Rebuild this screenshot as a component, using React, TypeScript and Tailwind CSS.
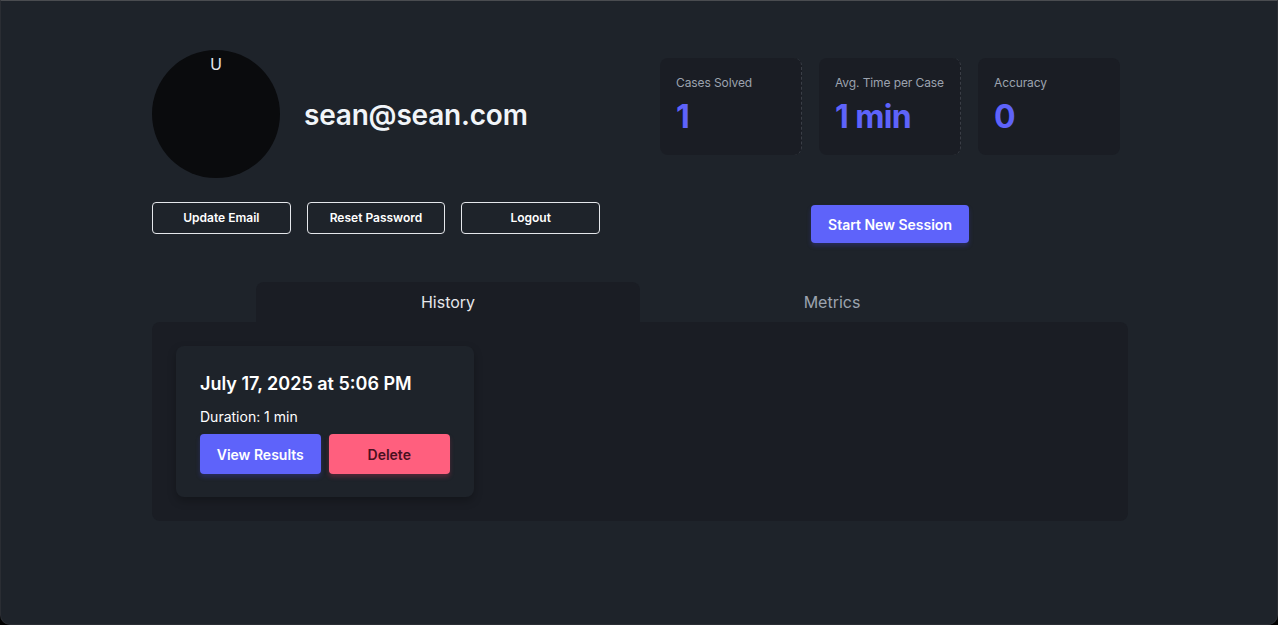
import React from "react";

export default function App() {
  return (
    <div className="w-[1278px] h-[625px] bg-[#000] overflow-hidden" style={{ fontFamily: "Inter, 'Noto Sans', sans-serif" }}>
      <div className="w-full h-full bg-[#1e232a] border-t border-[#4a4c50] border-x border-b border-x-[#2a2d33] border-b-[#2a2d33] rounded-b-[10px] pt-[49px]">
        <div className="w-[976px] mx-auto translate-x-[1px]">
          <div className="flex">
            <div className="flex flex-col w-[448px]">
              <div className="flex items-center">
                <div className="w-32 h-32 rounded-full bg-[#0a0b0d] flex justify-center pt-[5px]">
                  <span className="text-[16px] leading-[20px] text-[#e5e7eb]" style={{ fontFamily: "'Liberation Sans', Arial, sans-serif" }}>U</span>
                </div>
                <div className="ml-6 mt-[2px] text-[28px] font-semibold text-[#f1f5f9] tracking-[-0.2px]">sean@sean.com</div>
              </div>
              <div className="flex gap-4 mt-6">
                {["Update Email", "Reset Password", "Logout"].map((t) => (
                  <button key={t} className="w-[139px] h-8 border border-[#e5e7eb] rounded-[4px] text-[12px] font-semibold text-white">
                    {t}
                  </button>
                ))}
              </div>
            </div>
            <div className="flex flex-col items-center ml-[60px] w-[460px] pt-[8px]">
              <div className="flex gap-[17px]">
                {[
                  { l: "Cases Solved", v: "1", d: true },
                  { l: "Avg. Time per Case", v: "1 min", d: true },
                  { l: "Accuracy", v: "0", d: false },
                ].map((s) => (
                  <div
                    key={s.l}
                    className={`w-[142px] h-[97px] rounded-lg bg-[#1a1d24] px-4 pt-[17px] ${s.d ? "border-r border-dashed border-[#3a3e46]" : ""}`}
                  >
                    <div className="text-[12px] leading-4 text-[#9ca3af] whitespace-nowrap tracking-[-0.1px]">{s.l}</div>
                    <div className="mt-[6px] text-[32px] leading-10 font-bold text-[#5e63fa] tracking-[-0.6px] whitespace-nowrap">{s.v}</div>
                  </div>
                ))}
              </div>
              <button className="mt-[50px] w-[158px] h-[38px] rounded-[4px] bg-[#5e63fa] text-white text-[14px] font-semibold shadow-[0_3px_4px_rgba(60,64,180,0.35)]">
                Start New Session
              </button>
            </div>
          </div>

          <div className="mt-[39px] flex justify-center">
            <div className="w-[768px] flex">
              <div className="flex-1 h-10 rounded-t-lg bg-[#1a1d24] flex items-center justify-center text-[16px] text-[#e5e7eb]">History</div>
              <div className="flex-1 h-10 flex items-center justify-center text-[16px] text-[#9ca3af]">Metrics</div>
            </div>
          </div>
          <div className="h-[199px] rounded-lg bg-[#1a1d24] p-6">
            <div className="w-[298px] h-[151px] rounded-lg bg-[#1e232a] p-6 shadow-[0_4px_8px_rgba(0,0,0,0.25)]">
              <div className="text-[18px] leading-[26px] font-semibold text-white mt-[1px]">July 17, 2025 at 5:06 PM</div>
              <div className="mt-[10px] text-[14px] leading-5 text-white">Duration: 1 min</div>
              <div className="flex gap-2 mt-[7px]">
                <button className="w-[121px] h-10 rounded-[4px] bg-[#5e63fa] text-white text-[14px] font-semibold shadow-[0_3px_4px_rgba(60,64,180,0.35)]">View Results</button>
                <button className="w-[122px] h-10 rounded-[4px] bg-[#ff5f7e] text-[#4a1020] text-[14px] font-semibold shadow-[0_3px_4px_rgba(180,50,80,0.35)]">Delete</button>
              </div>
            </div>
          </div>
        </div>
      </div>
    </div>
  );
}
